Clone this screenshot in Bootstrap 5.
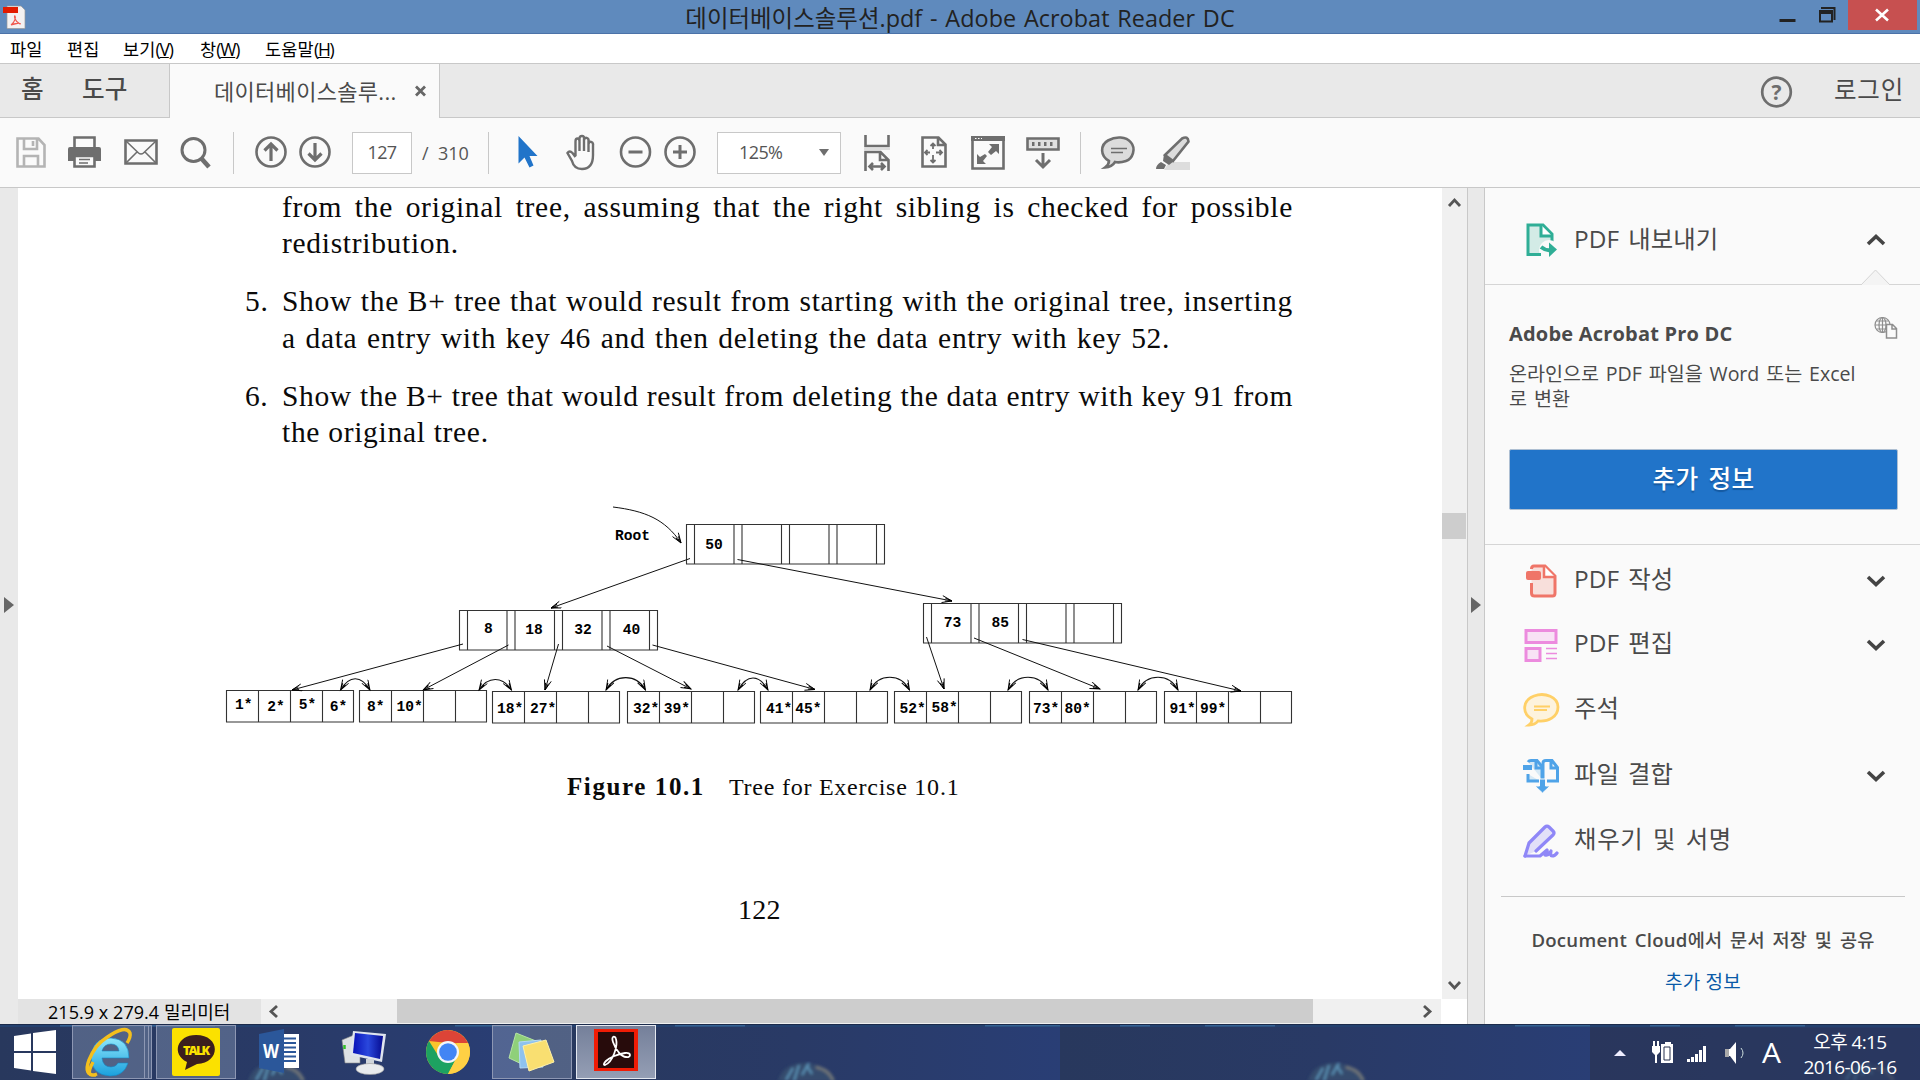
<!DOCTYPE html>
<html lang="ko">
<head>
<meta charset="utf-8">
<title>데이터베이스솔루션.pdf - Adobe Acrobat Reader DC</title>
<link href="https://cdn.jsdelivr.net/npm/bootstrap@5.3.0/dist/css/bootstrap.min.css" rel="stylesheet">
<style>
body{width:1920px;height:1080px;overflow:hidden;font-family:"Open Sans","Noto Sans CJK KR",sans-serif;color:#4a4a4a;background:#fafafa;line-height:1}
svg{display:block;flex:none;overflow:visible}
.app-title{height:34px;background:#5f8abd;border-bottom:1px solid #4b72a8;color:#222}
.title-text{font-size:23.4px;line-height:36px;flex:1;text-align:center;padding-left:121px;letter-spacing:.05px;word-spacing:1.6px}
.win-btns{width:149px}
.close-btn{width:69px;height:30px;background:#c75050;margin-right:3px}
.menu-row{height:30px;background:#fff;border-bottom:1px solid #c8c8c8;color:#000;font-size:17.5px;padding:3px 0 0 10px}
.menu-row span{letter-spacing:.2px}
.menu-row i{font-style:normal;letter-spacing:-1.2px}
.tab-row{height:54px;background:#e9e9e9}
.tab-side{border-bottom:1px solid #c8c8c8}
.tab-home{width:170px;border-right:1px solid #c8c8c8;font-size:24.6px;font-weight:500;padding:0 0 2px 21px}
.tab-doc{width:270px;background:#fafafa;border-right:1px solid #c8c8c8;font-size:22px;padding:0 12px 1px 44px;letter-spacing:.3px}
.login{font-size:24.5px;padding-right:16px;letter-spacing:.8px}
.tool-row{height:70px;background:#fafafa;border-bottom:1px solid #c8c8c8;display:grid;align-items:center;padding-left:16px;
grid-template-columns:52px 56px 56px 53px 22px 44px 53px 70px 66px 29px 48px 54px 45px 53px 147px 57px 50px 55px 54px 21px 55px 40px;font-size:18px;color:#555}
.tool-row svg{stroke:#6e6e6e;fill:none;stroke-width:2.6}
.v-sep{width:1px;height:42px;background:#c8c8c8}
.tool-box{height:42px;border:1px solid #c8c8c8;background:#fff;letter-spacing:-.6px;padding-bottom:2px}
.page-box{width:60px}.zoom-box{width:124px;padding:0 11px 2px 21px}
.main-area{height:836px}
.gutter{width:18px;background:#e9e9e9;padding-left:4px}
.doc-col{width:1449px}
.doc-page{height:811px;width:1424px;background:#fff;overflow:hidden;color:#0a0a0a;font-family:"Liberation Serif",serif;font-size:29.5px}
.doc-line{display:block;white-space:nowrap;line-height:36px;width:1011px;margin-left:264px;letter-spacing:.7px;position:relative}
.full-line{text-align:justify;text-align-last:justify}
.tight-line{letter-spacing:.62px}
.doc-line b{position:absolute;left:-37px;font-weight:400}
.caption{font-size:24px;letter-spacing:.76px;line-height:30px;margin-left:549px}
.caption strong{font-size:25px;letter-spacing:1.6px}
.page-no{margin-left:720px;line-height:30px;font-size:28px;letter-spacing:.3px}
.v-scroll{width:25px;background:#f0f0f0;height:811px}
.v-thumb{width:24px;height:26px;background:#cdcdcd}
.status-row{height:25px;background:#fff;color:#000}
.size-text{width:243px;background:#e3e3e3;font-size:18px;padding-left:30px;white-space:nowrap;letter-spacing:.05px}
.h-scroll{width:1180px;background:#f0f0f0}
.h-thumb{width:916px;height:24px;background:#cdcdcd}
.strip{width:18px;background:#e9e9e9;border-left:1px solid #c8c8c8;border-right:1px solid #c8c8c8;padding-left:3px}
.side-pane{width:435px;background:#fafafa}
.export-head{height:97px;border-bottom:1px solid #d5d5d5;padding:8px 35px 0 38px;position:relative}
.notch{position:absolute;right:30px;bottom:-2px}
.tool-name{font-size:24.4px;padding:0 0 2px 15px;flex:1;white-space:nowrap;word-spacing:2.5px;letter-spacing:.1px}
.promo{height:260px;border-bottom:1px solid #d5d5d5;padding:32px 22px 0 24px}
.promo h2{font-size:20px;font-weight:700;letter-spacing:.2px;margin:5px 0 0;line-height:24px}
.promo p{font-size:19.6px;line-height:25px;margin:16px 0 0;width:380px;white-space:nowrap;letter-spacing:-.05px;word-spacing:1.9px}
.more-btn{--bs-btn-bg:#2174c9;--bs-btn-border-color:#aebfd2;height:61px;margin-top:38px;font-size:24.6px;--bs-btn-border-radius:2px;font-weight:500;word-spacing:3px;letter-spacing:.4px;text-shadow:0 2px 1px #1559a0}
.tool-item{height:65px;padding:0 35px 0 38px}
.cloud{margin:0 15px 0 16px;border-top:1px solid #c8c8c8;text-align:center;padding-top:31px}
.cloud-head{font-size:18.6px;font-weight:500;line-height:24px;letter-spacing:.25px;word-spacing:2.6px;white-space:nowrap}
.cloud-head span{font-weight:600}
.cloud-link{font-size:19px;color:#0a5aa8;line-height:24px;margin-top:18px;text-decoration:none;display:block;letter-spacing:.2px}
.task-bar{height:56px;background:#29375f;position:relative;overflow:hidden;color:#fff}
.task-bg{position:absolute;left:0;top:0}
.task-items{position:relative;height:56px;width:100%;padding-top:1px}
.task-slot{height:54px}
.lit{background:rgba(150,165,195,.38);border:1px solid #8d97b3}
.active-app{background:linear-gradient(#75809a,#949eb4);border:1px solid #e4e8f0}
.clock{font-size:19px;line-height:25px;text-align:center;width:112px;white-space:nowrap;letter-spacing:-.6px}
</style>
<script src="https://cdn.jsdelivr.net/npm/bootstrap@5.3.0/dist/js/bootstrap.bundle.min.js"></script>
</head>
<body class="d-flex flex-column">

<header class="app-title d-flex">
  <svg width="28" height="34"><path d="M7 6h14l4 4v18.500h-18z" fill="#f4f2f2" stroke="#999" stroke-width=".7"/><path d="M3 7h15v6H3z" fill="#e21b00"/><path d="M11 25c4-3 5-8 4-9s-1 5 5 8c2-1-5-1-9 1z" fill="none" stroke="#f0584e" stroke-width="1.100"/></svg>
  <div class="title-text">데이터베이스솔루션.pdf - Adobe Acrobat Reader DC</div>
  <div class="win-btns d-flex justify-content-between">
    <svg width="64" height="30"><path d="M8.500 19h16v3h-16z" fill="#222"/><path d="M50 8h13.500v12M49 11.500h12v10H49z" fill="none" stroke="#222" stroke-width="2"/><path d="M48 10h14v4H48z" fill="#222"/></svg>
    <div class="close-btn"><svg width="69" height="30"><path d="M28 9.500l12 11M40 9.500l-12 11" stroke="#fff" stroke-width="2.600"/></svg></div>
  </div>
</header>

<nav class="menu-row d-flex align-items-center">
  <span style="width:57px">파일</span><span style="width:56px">편집</span><span style="width:77px">보기<i>(<u>V</u>)</i></span><span style="width:65px">창<i>(<u>W</u>)</i></span><span>도움말<i>(<u>H</u>)</i></span>
</nav>

<div class="tab-row d-flex">
  <div class="tab-home tab-side d-flex align-items-center"><span style="width:61px">홈</span><span>도구</span></div>
  <div class="tab-doc d-flex align-items-center justify-content-between"><span>데이터베이스솔루...</span><svg width="13" height="13"><path d="M2 2.500l9 9M11 2.500l-9 9" stroke="#666" stroke-width="2.800"/></svg></div>
  <div class="tab-side flex-fill d-flex align-items-center justify-content-end">
    <svg width="32" height="32" class="mt-1" style="margin-right:41px"><circle cx="15.500" cy="15" r="14.300" fill="none" stroke="#6e6e6e" stroke-width="2.700"/><text x="15.500" y="22.500" text-anchor="middle" font-size="21" font-weight="700" fill="#6e6e6e">?</text></svg>
    <div class="login">로그인</div>
  </div>
</div>

<div class="tool-row">
  <svg width="30" height="31" style="stroke:#b4b4b4"><path d="M1.500 1.500h21l6 6.500v21.500h-27zM8 2v10h13V2M8 29V19h14v10M17 4v5"/></svg>
  <svg width="33" height="32"><g transform="translate(0 -1)"><path d="M6.500 11V1.500h20V11"/><path d="M2 11h29q2 0 2 2v12h-6v-4H6v4H0V13q0-2 2-2z" fill="#6e6e6e" stroke="none"/><path d="M6.500 20v10.500h20V20z" fill="#fafafa"/><path d="M11 23.500h11M11 27h9" stroke-width="1.600"/></g></svg>
  <svg width="34" height="26"><g transform="translate(0 -1)"><path d="M1.500 1.500h31v23h-31z"/><path d="M2 2l12.500 12q2.500 2 5 0L32 2M2 24l11-11M32 24L21 13" stroke-width="1.600"/></g></svg>
  <svg width="31" height="32"><circle cx="13.500" cy="13" r="11.500" stroke-width="3"/><path d="M21 21l8 9" stroke-width="4.600"/></svg>
  <div class="v-sep"></div>
  <svg width="32" height="32"><circle cx="16" cy="15" r="14.500"/><path d="M16 24V8M9.500 13.500L16 7l6.500 6.500" stroke-width="3.200"/></svg>
  <svg width="32" height="32"><circle cx="16" cy="15" r="14.500"/><path d="M16 6v16M9.500 16.500L16 23l6.500-6.500" stroke-width="3.200"/></svg>
  <div class="tool-box page-box d-flex align-items-center justify-content-center">127</div>
  <span>/&nbsp; 310</span>
  <div class="v-sep"></div>
  <svg width="20" height="32"><path d="M1.500-1v27.500l6-6 5 10 4-2-4-9.500h8z" fill="#2174c9" stroke="none"/></svg>
  <svg width="34" height="36"><g transform="translate(1 0)"><path d="M9.500 21V6.500q0-3 2-3t2 3V16m0-10V4q0-3 2.500-3T18 4v12m0-11q1-3 3-2t1.500 3v11m0-8q1-3 3-2t1.500 3.500V20q0 14-11 14-8 0-10-8l-4.500-8q2-3 5 0l3 4" stroke-width="2.400"/></g></svg>
  <svg width="33" height="32"><circle cx="16.500" cy="15" r="14.500"/><path d="M9.500 15h14" stroke-width="3"/></svg>
  <svg width="32" height="32"><circle cx="16" cy="15" r="14.500"/><path d="M9 15h14M16 8v14" stroke-width="3"/></svg>
  <div class="tool-box zoom-box d-flex align-items-center justify-content-between">125%<svg width="10" height="7"><path d="M0 1h10L5 8z" fill="#6e6e6e" stroke="none"/></svg></div>
  <svg width="27" height="36"><path d="M1.500 0v11h23V0M1.500 36V17h15l8 8v11M16 17v8h8M6 31.500h14M9 28l-3.500 3.500L9 35M17 28l3.500 3.500L17 35"/><path d="M0 14h26" stroke="#ddd" stroke-width="2"/></svg>
  <svg width="26" height="32"><g transform="translate(0 -1)"><path d="M1.500 1.500h16l7 7v22h-23zM17 2v7h7"/><path d="M12 8v5M12 19v6M4 16.500h5M15 16.500h6M9.500 10L12 7.500l2.500 2.500M9.500 24l2.500 2.500 2.500-2.500M6.500 14L4 16.500 6.500 19M18.500 14l2.500 2.500-2.500 2.500" stroke-width="1.800"/></g></svg>
  <svg width="34" height="34"><path d="M1.500 1.500h31v31h-31z"/><path d="M0 0h34v5H0zM18 8h10v10l-3-3-5 4-3-3 4-5zM6 28V18l3 3 5-3 2 2-4 5 3 3z" fill="#6e6e6e" stroke="none"/><path d="M4 2.500h7" stroke="#fff" stroke-width="1" stroke-dasharray="1.500 1.500"/></svg>
  <svg width="34" height="32"><path d="M1.500 1.500h31v11h-31z" fill="#e0e0e0"/><path d="M6 7h22" stroke-width="4" stroke-dasharray="2.500 3.500"/><path d="M17 16v14M10 23l7 7 7-7" stroke-width="3"/></svg>
  <div class="v-sep"></div>
  <svg width="34" height="33"><path d="M8 25C-1 20-1 9 7 4.500s18-4 23 2 2 16-5 18.500q-6 2-11 1-3 5-10 5.500 4-3 4-6.500z" fill="#dcdcdc"/><path d="M10 12.500h16M10 16.500h12" stroke-width="1.600"/></svg>
  <svg width="34" height="34"><path d="M13 26h21v8H8z" fill="#ddd" stroke="none"/><path d="M9 19L26 2.500q6-3 6.500 3L17 25z" fill="#dcdcdc"/><path d="M8 18l10 7-5 4-6-4zM5 26l5 3-2 4H0q0-4 5-7z" fill="#6e6e6e" stroke="none"/></svg>
</div>

<div class="main-area d-flex">
  <div class="gutter d-flex align-items-center"><svg width="10" height="16"><path d="M0-1l10 8L0 15z" fill="#666"/></svg></div>
  <div class="doc-col">
    <div class="d-flex">
      <div class="doc-page">
        <div class="doc-line full-line" style="margin-top:1px">from the original tree, assuming that the right sibling is checked for possible</div>
        <div class="doc-line">redistribution.</div>
        <div class="doc-line full-line" style="margin-top:22px"><b>5.</b>Show the B+ tree that would result from starting with the original tree, inserting</div>
        <div class="doc-line" style="word-spacing:1.6px;margin-top:1px">a data entry with key 46 and then deleting the data entry with key 52.</div>
        <div class="doc-line full-line tight-line" style="margin-top:22px"><b>6.</b>Show the B+ tree that would result from deleting the data entry with key 91 from</div>
        <div class="doc-line">the original tree.</div>
        <svg id="tree" width="1100" height="250" viewBox="210 490 1100 250" style="margin:40px 0 0 192px" font-family="Liberation Mono" font-weight="700" font-size="14.6" fill="#000">
          <defs><marker id="tip" markerUnits="userSpaceOnUse" markerWidth="14" markerHeight="10" refX="11" refY="4" orient="auto-start-reverse"><path d="M1 .5L11 4 1 7.500M4 2.500L11 4 4 5.500" fill="none" stroke="#000" stroke-width=".9"/></marker></defs>
          <g id="boxes" fill="none" stroke="#333" stroke-width="1.100"></g>
          <g fill="none" stroke="#111" stroke-width="1" marker-end="url(#tip)">
            <path d="M613 507C645 511 665 519 681 543"/>
            <path d="M690 558.500L551 608"/><path d="M737.500 559.500L952 601"/>
            <path d="M463 644L292 690"/><path d="M508.500 645L423 690"/><path d="M558.500 644L545 690"/><path d="M607 646L691 689"/><path d="M652.500 645L815 689.500"/>
            <path d="M926.500 637L944 689"/><path d="M974 638L1100 689"/><path d="M1022.500 639.500L1241 691"/>
          </g>
          <g id="arcs" fill="none" stroke="#111" stroke-width="1.100"></g>
          <g id="keys"></g>
        </svg>
        <div class="caption" style="margin-top:32px"><strong>Figure 10.1</strong><span style="padding-left:24px">Tree for Exercise 10.1</span></div>
        <div class="page-no" style="margin-top:93px">122</div>
      </div>
      <div class="v-scroll d-flex flex-column justify-content-between">
        <div><svg width="24" height="26"><path d="M7 18l5.500-6 5.500 6" fill="none" stroke="#555" stroke-width="2.800"/></svg><div class="v-thumb" style="margin-top:299px"></div></div>
        <svg width="24" height="26"><path d="M7 9l5.500 6 5.500-6" fill="none" stroke="#555" stroke-width="2.800"/></svg>
      </div>
    </div>
    <div class="status-row d-flex">
      <div class="size-text d-flex align-items-center">215.9 x 279.4 밀리미터</div>
      <div class="h-scroll d-flex justify-content-between">
        <svg width="24" height="25"><path d="M16 7l-6 5.500 6 5.500" fill="none" stroke="#555" stroke-width="2.800"/></svg>
        <div class="h-thumb" style="margin-left:8px"></div>
        <svg width="24" height="25"><path d="M7 7l6 5.500-6 5.500" fill="none" stroke="#555" stroke-width="2.800"/></svg>
      </div>
    </div>
  </div>
  <div class="strip d-flex align-items-center"><svg width="10" height="16"><path d="M0-1l10 8L0 15z" fill="#666"/></svg></div>

  <aside class="side-pane">
    <div class="export-head d-flex align-items-center">
      <svg width="36" height="34" fill="none" stroke="#2fae96" stroke-width="3"><path d="M17 31.500H5V2h15l9 9v8" fill="#d3ebe6"/><path d="M18 2v11h11" fill="#fff"/><circle cx="26" cy="27" r="10" fill="#fafafa" stroke="none"/><path d="M5 31.500h13" /><path d="M18 24q5 4 10 3" stroke-width="4"/><path d="M26 19.500l8 7-8 7.500z" fill="#2fae96" stroke="none"/></svg>
      <div class="tool-name">PDF 내보내기</div>
      <svg width="18" height="12"><path d="M1 10l8-7.500L17 10" fill="none" stroke="#444" stroke-width="3.600"/></svg>
      <svg class="notch" width="29" height="17"><path d="M0 16L14.500 1 29 16" fill="#f4f4f4" stroke="#d5d5d5"/></svg>
    </div>
    <div class="promo">
      <div class="d-flex justify-content-between" style="height:28px"><h2>Adobe Acrobat Pro DC</h2>
      <svg width="24" height="22" fill="none" stroke="#8e8e8e" stroke-width="1.200"><circle cx="8.500" cy="8" r="7.500"/><ellipse cx="8.500" cy="8" rx="3.500" ry="7.500"/><path d="M8.500 0v16M1 8h15M2.500 4h12M2.500 12h12"/><path d="M12.500 7.500h6l4 4v9.500h-10zM18 8v4h4" fill="#fafafa" stroke-width="1.500"/></svg></div>
      <p>온라인으로 PDF 파일을 Word 또는 Excel<br>로 변환</p>
      <button class="btn btn-primary more-btn w-100 d-block py-0">추가 정보</button>
    </div>
    <div class="tool-item d-flex align-items-center" style="margin-top:3px">
      <svg width="36" height="34" fill="none" stroke="#ef7568" stroke-width="3"><path d="M8.500 19v10q0 3 3 3h18q2.500 0 2.500-3V12L22 2H11q-2.500 0-2.500 3" fill="#f8dfdb"/><path d="M21 2v11h11" fill="#fff" stroke-width="2.500"/><path d="M5 7h11q2 0 2 2v5q0 2-2 2H5q-2 0-2-2V9q0-2 2-2z" fill="#ef7568" stroke="none"/></svg>
      <div class="tool-name">PDF 작성</div><svg width="18" height="12"><path d="M1 2l8 7.500L17 2" fill="none" stroke="#444" stroke-width="3.600"/></svg>
    </div>
    <div class="tool-item d-flex align-items-center" style="height:63px">
      <svg width="36" height="34" fill="#f8e2f5" stroke="#ec8bde" stroke-width="3"><path d="M3 2.500h30v12H3zM3 20.500h14v12H3z"/><path d="M23 20.500h11M23 25.500h11M23 30.500h11" stroke-width="1.700"/></svg>
      <div class="tool-name">PDF 편집</div><svg width="18" height="12"><path d="M1 2l8 7.500L17 2" fill="none" stroke="#444" stroke-width="3.600"/></svg>
    </div>
    <div class="tool-item d-flex align-items-center" style="margin-top:1px">
      <svg width="36" height="34" fill="#fdf3dd" stroke="#ffd067" stroke-width="2.800"><path d="M9 26C-2 20 0 7 11 3s24 1 24 11-10 15-20 14q-3 4-9 4 3-2 3-6z"/><path d="M11 13.500h16M11 17h13" stroke-width="1.800"/></svg>
      <div class="tool-name">주석</div>
    </div>
    <div class="tool-item d-flex align-items-center" style="margin-top:1px">
      <svg width="36" height="34" fill="none" stroke="#4fa3e8" stroke-width="3"><path d="M5 15v7h12M5 3q1-1.500 3-1.500h6l5 6V20" fill="#d7e9f5"/><path d="M13 2v7h6M20 20V4q0-2.500 3-2.500h6l5.500 7V22H24M28 2v7h6"/><path d="M0 6h9v5H0z" fill="#4fa3e8" stroke="none"/><path d="M16.500 20h6v7h4.500l-7.500 7-7.500-7h4.500z" fill="#4fa3e8" stroke="#fafafa" stroke-width="1"/></svg>
      <div class="tool-name">파일 결합</div><svg width="18" height="12"><path d="M1 2l8 7.500L17 2" fill="none" stroke="#444" stroke-width="3.600"/></svg>
    </div>
    <div class="tool-item d-flex align-items-center">
      <svg width="36" height="34" fill="none" stroke="#8f87f7" stroke-width="3.200" stroke-linecap="round" stroke-linejoin="round"><path d="M2 32l4-13L22 3q2-2 4 0l4 4q2 2 0 4L13 27" fill="#e2e0f8"/><path d="M2 32h15l7-6q1 4-2 5 4 1 6-4-1 5 1 5 3 0 5-3"/></svg>
      <div class="tool-name" style="letter-spacing:.7px">채우기 및 서명</div>
    </div>
    <div class="cloud" style="margin-top:23px">
      <div class="cloud-head"><span>Document Cloud</span>에서 문서 저장 및 공유</div>
      <a class="cloud-link">추가 정보</a>
    </div>
  </aside>
</div>

<footer class="task-bar">
  <svg class="task-bg" width="1920" height="56">
    <defs>
      <linearGradient id="tile"><stop offset="0" stop-color="#28385d"/><stop offset=".5" stop-color="#293a66"/><stop offset="1" stop-color="#293e75"/></linearGradient>
      <filter id="soft"><feGaussianBlur stdDeviation="1.500"/></filter>
      <g id="wall"><path d="M0 0h530v56H0z" fill="url(#tile)"/><path d="M0 0h530v3H0z" fill="#24416f"/><path d="M145 1.500h70M455 1.500h75M60 1.500h30" stroke="#4179ad" stroke-width="2" opacity=".6"/><g filter="url(#soft)" opacity=".85" transform="translate(-4 0)"><path d="M252 57q5-18 28-18 22 2 30 18" fill="#37506f"/><path d="M260 56l7-12M268 57l5-16M276 51l7-12M286 50l-5-8" stroke="#66a5c8" stroke-width="2"/><path d="M290 43q14 3 17 14" stroke="#7d7f7a" stroke-width="3" fill="none"/></g></g>
    </defs>
    <use href="#wall"/><use href="#wall" x="530"/><use href="#wall" x="1060"/><use href="#wall" x="1590"/>
    <path d="M0 0h1920v1H0z" fill="#1c2b4b"/>
    <path d="M1590 4h330v52h-330z" fill="#29365c" opacity=".65"/>
  </svg>
  <div class="task-items d-flex">
    <svg width="72" height="54"><path d="M14 11l17-2.500V26H14zM33 8l23-3v21H33zM14 28h17v17.500L14 43zM33 28h23v21l-23-3z" fill="#fff"/></svg>
    <div class="task-slot lit" style="width:73px"><svg width="70" height="52"><defs><linearGradient id="ieb" x2="0" y2="1"><stop stop-color="#8ee6fb"/><stop offset="1" stop-color="#1aa0dd"/></linearGradient></defs><path d="M56 32H29q1 9 9 9 5 0 7-4h10q-4 13-18 13-18-1-19-18 1-20 20-20 18 1 18 20zM29 25h17q-1-7-8-7t-9 7z" fill="url(#ieb)" fill-rule="evenodd" stroke="#1686c4" stroke-width=".6"/><path d="M20 36q-9 17 4 12M33 12q20-14 24-5 1 4-3 10M33 12Q22 19 16 34q-6 16 7 15" fill="none" stroke="#f4bf1d" stroke-width="3.400"/></svg></div>
    <div class="task-slot lit border-start-0" style="width:4px"></div><div class="task-slot lit border-start-0" style="width:3px"></div>
    <div class="task-slot lit" style="width:80px;margin-left:4px"><svg width="78" height="52"><rect x="15" y="2" width="48" height="48" rx="2" fill="#fbe100"/><path d="M39 9c25 0 25 28 1 29q-6 3-12 6l2-8C14 28 20 9 39 9z" fill="#3b1e1e"/><text x="39.500" y="28.500" text-anchor="middle" font-size="12.500" font-weight="800" fill="#fbe100" textLength="27" font-family="Open Sans">TALK</text></svg></div>
    <svg width="103" height="54"><g transform="translate(1 1)"><path d="M45 8h17v34H45z" fill="#fff"/><path d="M47 12.500h12M47 17h12M47 21.500h12M47 26h12M47 30.500h12M47 35h12" stroke="#2b579a" stroke-width="2"/><path d="M22 8l25-5v44l-25-5z" fill="#2b579a"/><text x="34" y="32" text-anchor="middle" font-size="20" font-weight="700" fill="#fff" font-family="Open Sans" textLength="16" lengthAdjust="spacingAndGlyphs">W</text></g></svg>
    <svg width="86" height="54"><defs><linearGradient id="scr"><stop stop-color="#0812b8"/><stop offset=".5" stop-color="#2a48dd"/><stop offset="1" stop-color="#050b90"/></linearGradient></defs><path d="M3 15l12-5 6 2v26L6 38z" fill="#dde1e4" stroke="#888" stroke-width=".6"/><path d="M5.500 20v4" stroke="#35c12b" stroke-width="2.500"/><path d="M14 6l33 3-4 28-32-7z" fill="#dfe5ee"/><path d="M16 8l28 3-3 23-27-6z" fill="url(#scr)"/><path d="M27 34h8v10h-8z" fill="#cfd5da"/><ellipse cx="31" cy="44" rx="14" ry="5.500" fill="#e8ebed" stroke="#999" stroke-width=".6"/></svg>
    <svg width="67" height="54"><g transform="translate(23 27)"><circle r="22" fill="#fbc52d"/><path d="M-19-11A22 22 0 0 1 20-9H0z" fill="#dc4437"/><path d="M-19-11A22 22 0 0 0 0 22L9 5-9 5z" fill="#1da261"/><path d="M20-9A22 22 0 0 1 0 22L9 5V-9z" fill="#ffd044"/><circle r="11" fill="#f3f5f8"/><circle r="8.800" fill="#4285f4"/></g></svg>
    <div class="task-slot lit" style="width:80px"><svg width="78" height="52"><g transform="translate(-1 0)"><path d="M24 7l20 8-8 26-19-9z" fill="#8fd07a" stroke="#b5e3a4"/><path d="M27 16l22-2 2 27-23 1z" fill="#8ec2ef" stroke="#b4d9f6"/><path d="M31 20l23-6 8 22-25 9z" fill="#f9df71" stroke="#fff1a8"/></g></svg></div>
    <div class="task-slot active-app" style="width:80px;margin-left:4px"><svg width="78" height="52"><path d="M17 3h44v42H17z" fill="#f01c05"/><path d="M21 6h36v36H21z" fill="#270b0b"/><path d="M28 39c8-3 13-19 11-26-1-4-5-3-3 3 3 9 9 15 13 15 5 1 6-5-1-4-8 1-16 5-19 8-2 2-3 4-1 4z" fill="none" stroke="#fff" stroke-width="1.800"/></svg></div>
    <svg class="ms-auto" width="174" height="54"><path d="M0 31l6-6 6 6z" fill="#eef"/><g transform="translate(37 16)" fill="#fff"><path d="M2 0h2v5h2V0h2v5h1v6L6 14v8H4v-8L1 11V5h1z"/><path d="M12 3h2V1h6v2h2v19H10V3z"/><path d="M13 6h6v13h-6z" fill="none" stroke="#26304e"/></g><path d="M73 34h3v3h-3zM77 32h3v5h-3zM81 29h3v8h-3zM85 25h3v12h-3zM89 21h3v16h-3z" fill="#fff"/><path d="M111 24h5l6-7v22l-6-8h-5z" fill="#fff"/><path d="M111 24h4v8h-4z" fill="#aaa"/><path d="M127 23q4 5 0 10" stroke="#cdd" fill="none"/><text x="148" y="38" font-size="28" fill="#fff" font-family="Open Sans" textLength="19" lengthAdjust="spacingAndGlyphs">A</text></svg>
    <div class="clock" style="margin:5px 14px 0 6px"><div>오후 4:15</div><div>2016-06-16</div></div>
  </div>
</footer>

<script>
// Draws node cells, sibling links and key labels of the B+ tree
const boxes=document.getElementById('boxes'),arcs=document.getElementById('arcs'),keys=document.getElementById('keys');
let out='';
for(const [x,y] of [[686.5,524.5],[459.5,610.500],[923.5,603.500]]){
  let d=`M${x} ${y}h198v39.500h-198z`;
  for(const o of [8,47.5,55.5,95,103,142.5,150.5,190]) d+=`M${x+o} ${y}v39.500`;
  out+=`<path d="${d}"/>`;
}
for(const [x,y] of [[226.5,690.5],[359.5,690.5],[492.5,691.5],[627.5,691.5],[760.5,691.5],[894.5,691.5],[1029.5,691.5],[1164.5,691.5]])
  out+=`<path d="M${x} ${y}h127v31.500h-127zM${x+32} ${y}v31.500M${x+64} ${y}v31.500M${x+96} ${y}v31.500"/>`;
boxes.innerHTML=out;
arcs.innerHTML=[[340.5,370,690,679],[479,511.5,690,680],[606,645.5,690,677.5],[738,768,690,678],[870,909.5,690,677],[1008,1048,690,677],[1138,1178,690,677]]
 .map(([a,b,y,t])=>`<path marker-start="url(#tip)" marker-end="url(#tip)" d="M${a} ${y}C${a+9} ${t-4} ${b-9} ${t-4} ${b} ${y}"/>`).join('');
keys.innerHTML=[['Root',615,540],['50',705.3,549],['8',484,633],['18',525.3,633.5],['32',574.3,633.5],['40',622.7,633.5],['73',943.7,626.7],['85',991.4,626.7],
['1*',235,708.7],['2*',267.3,711],['5*',298.7,708.7],['6*',329.7,711],['8*',367,711],['10*',396.4,711],['18*',497,713],['27*',530,713],['32*',633,712.5],['39*',663.7,713],['41*',766,713],['45*',795.3,713],['52*',899.6,713],['58*',931.5,712],['73*',1033,713],['80*',1064.5,713],['91*',1169.5,713],['99*',1200,713]]
 .map(([t,x,y])=>`<text x="${x}" y="${y}">${t}</text>`).join('');
</script>
</body>
</html>
